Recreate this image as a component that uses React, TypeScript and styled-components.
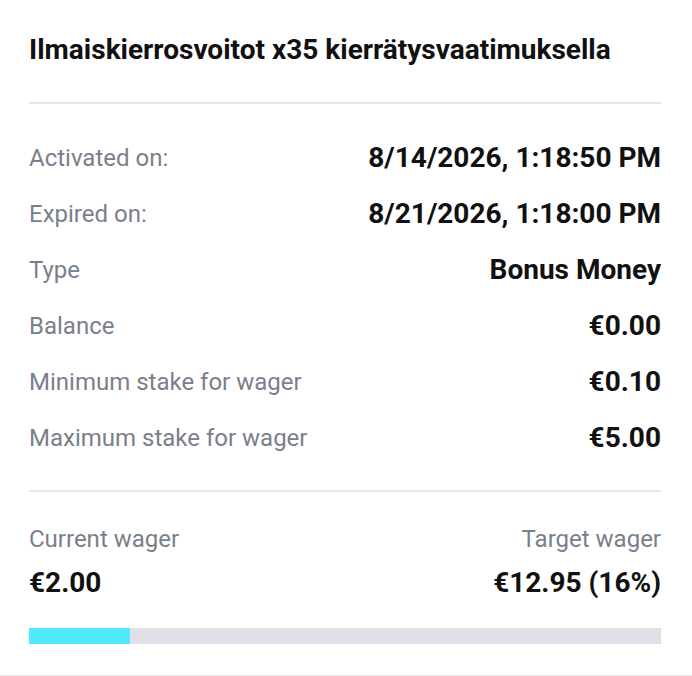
import React from "react";
import styled, { createGlobalStyle } from "styled-components";

const Global = createGlobalStyle`
  html, body { margin: 0; padding: 0; background: #ffffff; }
  body { font-family: Roboto, "Liberation Sans", sans-serif; -webkit-font-smoothing: antialiased; }
`;

const Card = styled.div`
  width: 692px;
  box-sizing: border-box;
  padding: 34px 31px 31px 29px;
  border-bottom: 1px solid #e4e4e6;
  background: #fff;
`;

const Title = styled.h2`
  margin: 0;
  font-size: 28px;
  line-height: 32px;
  font-weight: 700;
  color: #111;
  white-space: nowrap;
`;

const Divider = styled.hr<{ $top: number; $bottom: number }>`
  border: none;
  height: 2px;
  background: #e6e6e8;
  margin: ${(p) => `${p.$top}px 0 ${p.$bottom}px`};
`;

const List = styled.div`
  display: flex;
  flex-direction: column;
  gap: 24px;
`;

const Row = styled.div`
  display: flex;
  justify-content: space-between;
  align-items: center;
  height: 32px;
`;

const Label = styled.span`
  font-size: 24px;
  line-height: 32px;
  color: #7a808b;
`;

const Value = styled.span`
  font-size: 28px;
  line-height: 32px;
  font-weight: 700;
  color: #111;
`;

const WagerGrid = styled.div`
  display: grid;
  grid-template-columns: 1fr 1fr;
  row-gap: 12px;
`;

const WagerLabel = styled(Label)<{ $right?: boolean }>`
  text-align: ${(p) => (p.$right ? "right" : "left")};
`;

const WagerValue = styled(Value)<{ $right?: boolean }>`
  text-align: ${(p) => (p.$right ? "right" : "left")};
`;

const Track = styled.div`
  margin-top: 29px;
  height: 16px;
  background: #dfe0e7;
  display: flex;
`;

const Fill = styled.div`
  height: 100%;
  background: #4deafc;
`;

const rows: [string, string][] = [
  ["Activated on:", "8/14/2026, 1:18:50 PM"],
  ["Expired on:", "8/21/2026, 1:18:00 PM"],
  ["Type", "Bonus Money"],
  ["Balance", "€0.00"],
  ["Minimum stake for wager", "€0.10"],
  ["Maximum stake for wager", "€5.00"],
];

export default function App() {
  const pct = 16;
  return (
    <>
      <Global />
      <Card>
        <Title>Ilmaiskierrosvoitot x35 kierrätysvaatimuksella</Title>
        <Divider $top={36} $bottom={38} />
        <List>
          {rows.map(([l, v]) => (
            <Row key={l}>
              <Label>{l}</Label>
              <Value>{v}</Value>
            </Row>
          ))}
        </List>
        <Divider $top={36} $bottom={31} />
        <WagerGrid>
          <WagerLabel>Current wager</WagerLabel>
          <WagerLabel $right>Target wager</WagerLabel>
          <WagerValue>€2.00</WagerValue>
          <WagerValue $right>€12.95 (16%)</WagerValue>
        </WagerGrid>
        <Track>
          <Fill style={{ width: `${pct}%` }} />
        </Track>
      </Card>
    </>
  );
}
